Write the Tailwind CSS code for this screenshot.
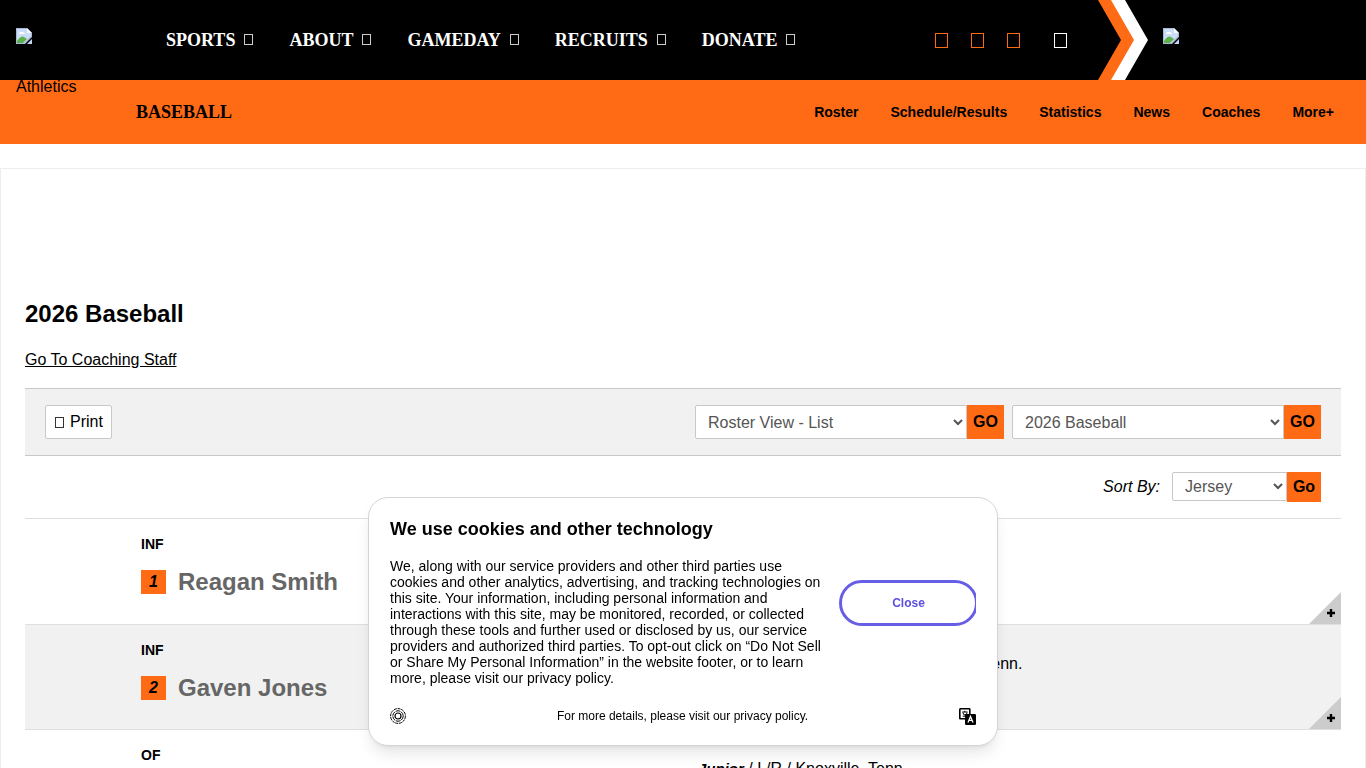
<!DOCTYPE html>
<html lang="en">
<head>
  <meta charset="UTF-8">
  <meta name="viewport" content="width=device-width, initial-scale=1.0">
  <title>2026 Baseball Roster</title>
  <script src="https://cdn.jsdelivr.net/npm/@tailwindcss/browser@4"></script>
</head>
<body class="bg-white text-black text-base font-['Liberation_Sans',Arial,sans-serif]">

  <svg class="hidden">
    <symbol id="missing" viewBox="0 0 16 16">
      <path d="M0 0h11l5 5v4l-7 7H0z" fill="#a9b9d4"/>
      <path d="M1 1h10v4h4v3l-7 7H1z" fill="#cbdcf8"/>
      <path d="M3 6q0-2 2-2 2-1 3 1 1 0 1 1z" fill="#fff"/>
      <path d="M1 15v-2q4-6 7-4l3 2-4 4z" fill="#5db14b"/>
      <path d="M11 0l5 5h-5z" fill="#f5f8ff"/>
      <path d="M16 11v5h-5z" fill="#c3d3f3"/>
    </symbol>
  </svg>

  <!-- main header -->
  <header class="relative flex h-20 items-center bg-black text-white">
    <a href="#" aria-label="Home" class="mb-2 ml-4 w-[150px]">
      <svg class="size-4"><use href="#missing"/></svg>
    </a>
    <span class="absolute left-4 top-[77px] text-black leading-5 z-10">Athletics</span>
    <nav class="flex gap-9 font-['Liberation_Serif',serif] text-lg font-bold">
      <a href="#" class="flex items-center gap-[9px]">SPORTS <i class="mb-[2px] h-[11px] w-[9px] border border-white/80"></i></a>
      <a href="#" class="flex items-center gap-[9px]">ABOUT <i class="mb-[2px] h-[11px] w-[9px] border border-white/80"></i></a>
      <a href="#" class="flex items-center gap-[9px]">GAMEDAY <i class="mb-[2px] h-[11px] w-[9px] border border-white/80"></i></a>
      <a href="#" class="flex items-center gap-[9px]">RECRUITS <i class="mb-[2px] h-[11px] w-[9px] border border-white/80"></i></a>
      <a href="#" class="flex items-center gap-[9px]">DONATE <i class="mb-[2px] h-[11px] w-[9px] border border-white/80"></i></a>
    </nav>
    <div class="ml-auto flex items-center">
      <div class="flex gap-[23px]">
        <a href="#" aria-label="Facebook" class="h-[15px] w-[13px] border border-[#ff6b15]"></a>
        <a href="#" aria-label="Twitter" class="h-[15px] w-[13px] border border-[#ff6b15]"></a>
        <a href="#" aria-label="Instagram" class="h-[15px] w-[13px] border border-[#ff6b15]"></a>
      </div>
      <button type="button" aria-label="Search" class="ml-[34px] h-[15px] w-[13px] border border-white"></button>
    </div>
    <svg class="ml-[30px] h-20 w-[51px]" viewBox="0 0 51 80">
      <path d="M1 0h14l23 40-23 40H1l23-40z" fill="#ff6b15"/>
      <path d="M14 0h14l23 40-23 40H14l23-40z" fill="#fff"/>
    </svg>
    <a href="#" aria-label="Partner" class="mb-2 ml-[15px] w-[203px]">
      <svg class="size-4"><use href="#missing"/></svg>
    </a>
  </header>

  <!-- sport navigation -->
  <div class="flex h-16 items-center justify-between bg-[#ff6b15] pl-[136px] pr-8">
    <a href="#" class="font-['Liberation_Serif',serif] text-lg font-bold">BASEBALL</a>
    <nav class="flex gap-8 text-sm font-bold">
      <a href="#">Roster</a>
      <a href="#">Schedule/Results</a>
      <a href="#">Statistics</a>
      <a href="#">News</a>
      <a href="#">Coaches</a>
      <a href="#">More+</a>
    </nav>
  </div>

  <main class="mt-6 border border-[#ededed] px-6 pt-[129px]">
    <h1 class="text-2xl font-bold">2026 Baseball</h1>
    <a href="#" class="mt-[18px] inline-block underline">Go To Coaching Staff</a>

    <div class="mt-4 flex items-center justify-between border-y border-[#c8c8c8] bg-[#f1f1f1] px-5 py-4">
      <button type="button" class="flex h-[34px] items-center gap-[6px] rounded-xs border border-[#c8c8c8] bg-white px-2">
        <i class="ml-px h-[11px] w-[9px] border border-[#333]"></i>Print
      </button>
      <div class="flex gap-2">
        <form class="flex">
          <select aria-label="Roster view" class="h-[34px] w-[272px] rounded-l-xs border border-[#c8c8c8] bg-white pl-2 text-[#555]">
            <option>Roster View - List</option>
          </select>
          <button type="button" class="w-[37px] bg-[#ff6b15] font-bold">GO</button>
        </form>
        <form class="flex">
          <select aria-label="Season" class="h-[34px] w-[272px] rounded-l-xs border border-[#c8c8c8] bg-white pl-2 text-[#555]">
            <option>2026 Baseball</option>
          </select>
          <button type="button" class="w-[37px] bg-[#ff6b15] font-bold">GO</button>
        </form>
      </div>
    </div>

    <form class="flex items-start justify-end px-5 py-4">
      <label for="sort" class="mr-3 leading-[30px] italic">Sort By:</label>
      <select id="sort" class="h-[29px] w-[115px] rounded-l-xs border border-[#c8c8c8] bg-white pl-2 text-[#555]">
        <option>Jersey</option>
      </select>
      <button type="button" class="h-[30px] w-[34px] bg-[#ff6b15] font-bold">Go</button>
    </form>

    <ul>
      <li class="relative flex h-[106px] border-t border-[#dfdfdf] pl-[116px] pt-[15px]">
        <div class="w-[557px]">
          <p class="text-sm font-bold">INF</p>
          <div class="mt-3 flex items-center gap-3">
            <span class="h-6 w-[25px] bg-[#ff6b15] text-center font-bold italic">1</span>
            <a href="#" class="text-2xl font-bold text-[#666]">Reagan Smith</a>
          </div>
        </div>
        <button type="button" aria-label="Expand Reagan Smith" class="absolute bottom-0 right-0">
          <svg class="size-8" viewBox="0 0 32 32"><path d="M32 0v32H0z" fill="#ccc"/><path d="M18 21h8M22 17v8" stroke="#000" stroke-width="2.4"/></svg>
        </button>
      </li>
      <li class="relative flex h-[105px] border-t border-[#dfdfdf] bg-[#f1f1f1] pl-[116px] pt-[15px]">
        <div class="w-[557px]">
          <p class="text-sm font-bold">INF</p>
          <div class="mt-3 flex items-center gap-3">
            <span class="h-6 w-[25px] bg-[#ff6b15] text-center font-bold italic">2</span>
            <a href="#" class="text-2xl font-bold text-[#666]">Gaven Jones</a>
          </div>
        </div>
        <p class="mt-3"><b class="text-[15px] italic">Redshirt Freshman</b> / L/L / Chattanooga, Tenn.</p>
        <button type="button" aria-label="Expand Gaven Jones" class="absolute bottom-0 right-0">
          <svg class="size-8" viewBox="0 0 32 32"><path d="M32 0v32H0z" fill="#ccc"/><path d="M18 21h8M22 17v8" stroke="#000" stroke-width="2.4"/></svg>
        </button>
      </li>
      <li class="relative flex h-[106px] border-t border-[#dfdfdf] pl-[116px] pt-[15px]">
        <div class="w-[557px]">
          <p class="text-sm font-bold">OF</p>
        </div>
        <p class="mt-3"><b class="text-[15px] italic">Junior</b> / L/R / Knoxville, Tenn.</p>
      </li>
    </ul>
  </main>

  <!-- cookie notice -->
  <section aria-label="Cookie notice" class="fixed bottom-[22px] left-1/2 w-[630px] max-w-full -translate-x-1/2 rounded-[20px] border border-[#d4d4d4] bg-white px-[21px] pt-5 pb-[19px] shadow-lg">
    <h2 class="text-lg leading-[22px] font-bold">We use cookies and other technology</h2>
    <div class="mt-[18px] flex gap-4">
      <p class="w-[433px] text-sm leading-4">We, along with our service providers and other third parties use cookies and other analytics, advertising, and tracking technologies on this site. Your information, including personal information and interactions with this site, may be monitored, recorded, or collected through these tools and further used or disclosed by us, our service providers and authorized third parties. To opt-out click on “Do Not Sell or Share My Personal Information” in the website footer, or to learn more, please visit our privacy policy.</p>
      <div class="flex-1 overflow-hidden pt-[22px]">
        <button type="button" class="h-[46px] w-[139px] rounded-full border-3 border-[#685ee6] text-xs font-bold text-[#5b50e0]">Close</button>
      </div>
    </div>
    <div class="mt-5 flex h-5 items-center justify-between">
      <button type="button" aria-label="Privacy settings">
        <svg class="size-4" viewBox="0 0 16 16" fill="none" stroke="#000">
          <circle cx="8" cy="8" r="7.4" stroke-dasharray="3 .8"/>
          <circle cx="8" cy="8" r="5.2" stroke-dasharray="4.6 .8"/>
          <circle cx="8" cy="8" r="3" stroke-width="1.2"/>
        </svg>
      </button>
      <p class="text-xs">For more details, please visit our privacy policy.</p>
      <button type="button" aria-label="Language">
        <svg class="h-[17px] w-[17px]" viewBox="0 0 17 17" fill="none" stroke="#000">
          <rect x=".8" y=".8" width="10" height="10" rx=".6" stroke-width="1.6"/>
          <path d="M3.2 4h5.4M5.8 2.8V4M4 4.5q0 2.5 2 2.5t2-2.5M3.7 8.2h4"/>
          <rect x="6" y="6" width="11" height="11" rx="1.2" fill="#000" stroke="none"/>
          <path d="M9 14.5l2.5-6 2.5 6M10 12.4h3" stroke="#fff" stroke-width="1.3"/>
        </svg>
      </button>
    </div>
  </section>

</body>
</html>
